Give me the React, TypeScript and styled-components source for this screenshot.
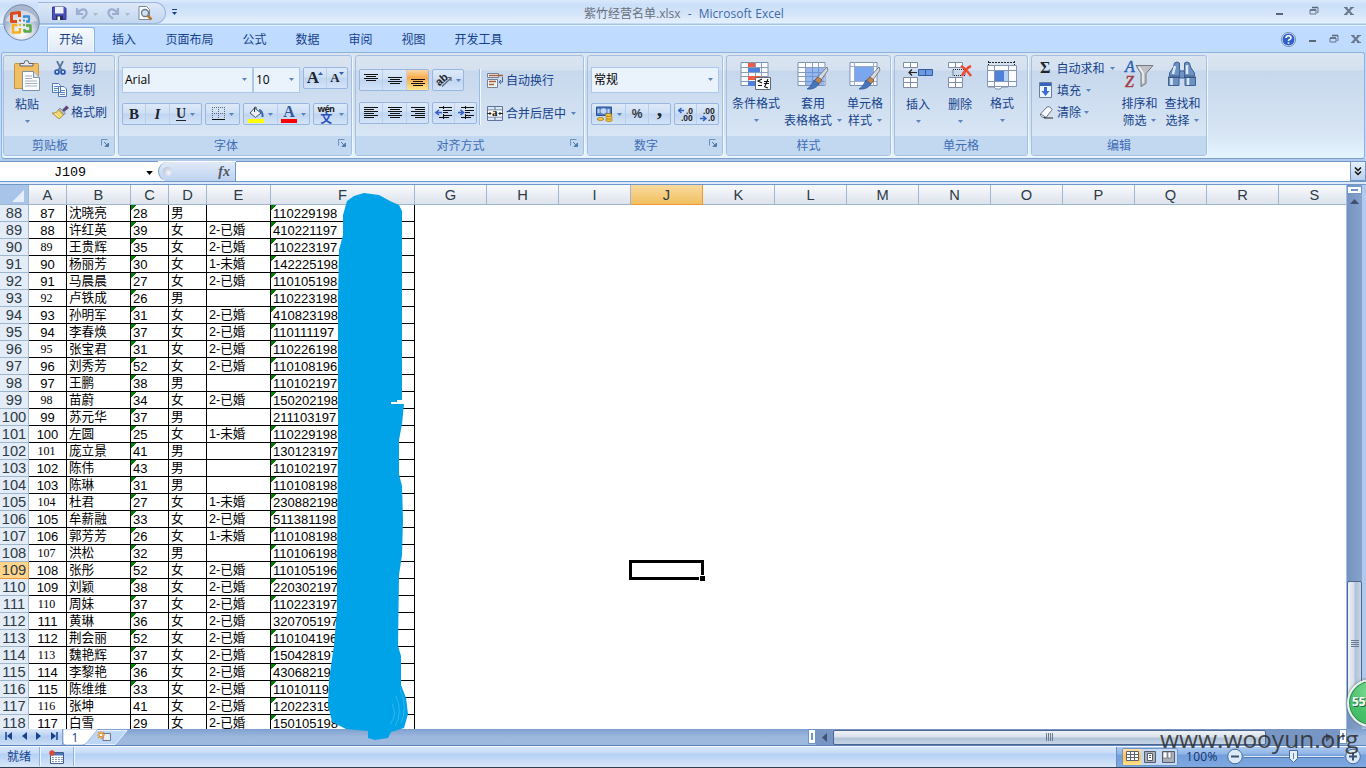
import React from "react";
import styled, { createGlobalStyle, css } from "styled-components";

const GlobalStyle = createGlobalStyle`
  * { box-sizing: border-box; }
  html, body { margin: 0; padding: 0; overflow: hidden; }
  body { font-family: "Open Sans", "Noto Sans CJK SC", sans-serif; font-size: 12px; color: #15428b; }
  svg { display: block; flex: none; }
`;

/* ---------- window frame ---------- */
const Window = styled.div`
  position: relative;
  width: 1366px;
  height: 768px;
  overflow: hidden;
  display: flex;
  flex-direction: column;
  background: #bfdbff;
`;
const TitleBar = styled.header`
  height: 25px;
  flex: none;
  display: flex;
  background: linear-gradient(#dbe9fb 0, #cadff8 5px, #d3e4f9 13px, #e4f0fd 23px, #a3c6ef 24px);
`;
const QuickAccess = styled.div`
  width: 128px;
  height: 22px;
  margin: 2px 0 0 38px;
  padding: 3px 0 0 14px;
  display: flex;
  border: 1px solid #9cb8dd;
  border-left: 0;
  border-radius: 0 12px 12px 0;
  background: linear-gradient(#dce8f8, #c3d7f0);
`;
const QatSlot = styled.div<{ $w: number; $pt?: number }>`
  width: ${(p) => p.$w}px;
  padding-top: ${(p) => p.$pt ?? 0}px;
`;
const QatMore = styled.div`
  padding: 9px 0 0 6px;
  width: 18px;
`;
const Title = styled.div`
  width: 400px;
  margin-left: 400px;
  padding-top: 5px;
  line-height: 17px;
  white-space: pre;
  word-spacing: 0.5px;
  font-size: 12px;
  color: #3e6aaa;
`;
const FileName = styled.span`
  color: #696f7c;
`;
const TitleControls = styled.div`
  margin-left: auto;
  padding: 6px 12px 0 0;
  display: flex;
  gap: 25px;
`;
const TabBar = styled.nav`
  height: 27px;
  flex: none;
  display: flex;
  padding-left: 47px;
  border-top: 1px solid #e6f1ff;
  background: #bfdbff;
`;
const Tab = styled.div<{ $w: number; $active?: boolean }>`
  width: ${(p) => p.$w}px;
  height: 28px;
  padding-top: 5px;
  text-align: center;
  line-height: 17px;
  ${(p) =>
    p.$active &&
    css`
      height: 26px;
      margin: 1px 0 0;
      padding-top: 3px;
      border: 1px solid #8db2e3;
      border-bottom: 0;
      border-radius: 3px 3px 0 0;
      box-shadow: inset 0 0 0 1px #f5faff;
      background: linear-gradient(#f7fbff, #dfe9f5);
    `}
`;
const TabControls = styled.div`
  margin-left: auto;
  padding: 1px 5px 0 0;
  display: flex;
  align-items: center;
  gap: 12px;
`;
const OfficeOrb = styled.div`
  position: absolute;
  left: 3px;
  top: 3px;
`;

/* ---------- ribbon ---------- */
const Ribbon = styled.section`
  height: 107px;
  flex: none;
  display: flex;
  gap: 3px;
  margin: 0 1px;
  padding: 2px 1px;
  border: 1px solid #8db2e3;
  border-bottom-color: #7b9fc9;
  border-radius: 3px;
  background: linear-gradient(#dbe5f1 0, #d5e1f0 17px, #c7d8ed 18px, #d6e4f3 78px, #e3f4ff 103px);
`;
const GroupBox = styled.div<{ $w: number }>`
  width: ${(p) => p.$w}px;
  height: 101px;
  border: 1px solid #a5bfdf;
  border-radius: 3px;
  box-shadow: 1px 1px 0 #eff6fd;
  display: flex;
  flex-direction: column;
  overflow: hidden;
`;
const GroupBody = styled.div<{ $pt?: number; $pl?: number }>`
  height: 80px;
  flex: none;
  display: flex;
  padding: ${(p) => p.$pt ?? 0}px 0 0 ${(p) => p.$pl ?? 0}px;
`;
const GroupLabel = styled.div`
  flex: 1;
  display: flex;
  justify-content: center;
  background: #c2d8f0;
  color: #3e6db5;
  line-height: 19px;
`;
const Launcher = styled.div`
  margin: 3px 4px 0 -13px;
`;
const LabelText = styled.span<{ $shift?: boolean }>`
  flex: 1;
  text-align: center;
  ${(p) => p.$shift && "padding-right: 18px;"}
`;
const Rows = styled.div<{ $gap: number; $ml?: number }>`
  display: flex;
  flex-direction: column;
  gap: ${(p) => p.$gap}px;
  margin-left: ${(p) => p.$ml ?? 0}px;
`;
const ClipboardList = styled(Rows)`
  margin-top: -3px;
`;
const Row = styled.div<{ $gap?: number; $pt?: number; $pl?: number }>`
  display: flex;
  gap: ${(p) => p.$gap ?? 3}px;
  padding-top: ${(p) => p.$pt ?? 0}px;
  padding-left: ${(p) => p.$pl ?? 0}px;
`;
const Combo = styled.div<{ $w: number }>`
  width: ${(p) => p.$w}px;
  height: 26px;
  padding: 0 5px 2px 2px;
  display: flex;
  align-items: center;
  justify-content: space-between;
  border: 1px solid #abc7ec;
  background: #eaf2fb;
  color: #000;
`;
const ButtonSet = styled.div`
  display: flex;
  height: 22px;
  border: 1px solid #98b6df;
  border-radius: 2px;
  background: linear-gradient(#dce9f8 0, #cfe0f5 9px, #c0d5f1 10px, #d3e4f8 100%);
`;
const Tool = styled.div<{ $w: number; $on?: boolean }>`
  width: ${(p) => p.$w}px;
  display: flex;
  align-items: center;
  justify-content: center;
  gap: 4px;
  & + & { border-left: 1px solid #b9cfec; }
  ${(p) => p.$on && css`background: linear-gradient(#fbd7a3, #fdaa4b 40%, #ffe58b);`}
`;
const Divider = styled.div`
  width: 2px;
  height: 56px;
  margin: 0 6px 0 2px;
  border-left: 1px solid #9abbe6;
  border-right: 1px solid #f0f7ff;
`;
const LineButton = styled.div<{ $gap?: number; $pl?: number }>`
  display: flex;
  align-items: center;
  height: 22px;
  padding-left: ${(p) => p.$pl ?? 0}px;
  gap: ${(p) => p.$gap ?? 3}px;
  white-space: nowrap;
`;
const BigButton = styled.div<{ $w: number }>`
  width: ${(p) => p.$w}px;
  display: flex;
  flex-direction: column;
  align-items: center;
  line-height: 17px;
  white-space: nowrap;
`;
const BigLine = styled.div<{ $top?: number }>`
  display: flex;
  align-items: center;
  gap: 5px;
  height: 17px;
  margin-top: ${(p) => p.$top ?? 0}px;
`;
const Glyph = styled.span<{ $size?: number; $italic?: boolean; $u?: boolean }>`
  font-family: "Liberation Serif", serif;
  font-weight: bold;
  font-size: ${(p) => p.$size ?? 15}px;
  line-height: 18px;
  color: #20242c;
  ${(p) => p.$italic && "font-style: italic;"}
  ${(p) => p.$u && "text-decoration: underline; text-underline-offset: 2px;"}
`;
const SizeMark = styled.svg`
  margin-left: -5px;
`;
const PercentGlyph = styled.span`
  font: bold 12px/18px "Liberation Sans", sans-serif;
  color: #33373f;
`;
const CommaGlyph = styled(Glyph)`
  line-height: 10px;
  height: 20px;
`;

/* ---------- formula bar ---------- */
const FormulaBar = styled.section`
  height: 26px;
  flex: none;
  display: flex;
  padding-top: 2px;
  background: linear-gradient(#b0c9ec 2px, transparent 2px), linear-gradient(#fff 22px, #6f97c7 22px, #6f97c7 23px, #dce9fa 23px, #dce9fa 25px, #6f97c7 25px);
`;
const NameBox = styled.div`
  width: 158px;
  height: 20px;
  padding: 2px 5px 0 54px;
  display: flex;
  align-items: center;
  justify-content: space-between;
  border-top: 1px solid #6f97c7;
  background: #fff;
  color: #000;
  font-family: "Liberation Mono", monospace;
  font-size: 13.4px;
`;
const FxArea = styled.div`
  width: 78px;
  height: 19px;
  margin-top: 1px;
  padding: 3px 5px 0 4px;
  display: flex;
  justify-content: space-between;
  border-right: 1px solid #6f97c7;
  border-left: 1px solid #7b9cca;
  border-radius: 10px 0 0 10px;
  background: linear-gradient(#e0ebf9, #bdd2ef);
`;
const FxKnob = styled.div`
  width: 9px;
  height: 9px;
  margin-top: 2px;
  border-radius: 50%;
  background: radial-gradient(circle at 65% 65%, #f5f8fd, #a9b6ca);
`;
const Fx = styled.span`
  font: italic bold 14px/13px "Liberation Serif", serif;
  color: #51565f;
`;
const FormulaInput = styled.div`
  flex: 1;
  border-top: 1px solid #6f97c7;
  height: 20px;
`;
const Expand = styled.div`
  width: 16px;
  height: 20px;
  padding: 5px 0 0 3px;
  border: 1px solid #6f97c7;
  background: linear-gradient(#e9f1fb, #b9cfec);
`;

/* ---------- sheet ---------- */
const Workspace = styled.main`
  height: 544px;
  flex: none;
  display: flex;
`;
const Sheet = styled.div`
  position: relative;
  width: 1347px;
  height: 544px;
  overflow: hidden;
  background: #fff;
  border-right: 1px solid #9ebfe6;
`;
const HeaderRow = styled.div`
  display: flex;
  height: 20px;
  width: 1400px;
`;
const Corner = styled.div`
  width: 29px;
  padding: 5px 3px 0 12px;
  border: solid #9eb6ce;
  border-width: 0 1px 1px 0;
  background: #a9c4e9;
`;
const ColHead = styled.div<{ $w: number; $on?: boolean }>`
  width: ${(p) => p.$w}px;
  border: solid #9eb6ce;
  border-width: 0 1px 1px 0;
  background: ${(p) => (p.$on ? "linear-gradient(#f9d99f, #f1c15f)" : "linear-gradient(#f8fafd, #dde3ec)")};
  ${(p) => p.$on && "border-color: #f29536;"}
  color: #2d3b45;
  text-align: center;
  font: 14.67px/20px "Liberation Sans", sans-serif;
`;
const DataRow = styled.div`
  display: flex;
  height: 17px;
`;
const RowHead = styled.div<{ $on?: boolean }>`
  width: 29px;
  border: solid #9eb6ce;
  border-width: 0 1px 1px 0;
  background: ${(p) => (p.$on ? "#ffd58d" : "#e4ecf7")};
  ${(p) => p.$on && "border-color: #f29536;"}
  color: #2d3b45;
  text-align: center;
  font: 14.67px/16px "Liberation Sans", sans-serif;
`;
const Cell = styled.div<{ $w: number; $center?: boolean; $serif?: boolean; $flag?: boolean }>`
  width: ${(p) => p.$w}px;
  padding-left: ${(p) => (p.$center ? 0 : 2)}px;
  text-align: ${(p) => (p.$center ? "center" : "left")};
  border: solid #000;
  border-width: 0 1px 1px 0;
  color: #000;
  overflow: hidden;
  white-space: nowrap;
  font: ${(p) => (p.$serif ? "12px" : "13px")}/17px ${(p) => (p.$serif ? '"Liberation Serif"' : '"Liberation Sans"')}, "Noto Sans CJK SC", sans-serif;
  ${(p) => p.$serif && "padding-right: 2px; line-height: 16px;"}
  ${(p) => p.$flag && "background: linear-gradient(135deg, #008000 3.6px, transparent 3.6px) 0 0 / 5px 5px no-repeat;"}
`;
const HanCell = styled(Cell)`
  font-size: 12.6px;
  line-height: 17px;
`;
const ActiveCell = styled.div`
  position: absolute;
  left: 629px;
  top: 375px;
  width: 75px;
  height: 20px;
  border: 3px solid #000;
`;
const FillHandle = styled.div`
  position: absolute;
  right: -5px;
  bottom: -5px;
  width: 7px;
  height: 7px;
  border: 1px solid #fff;
  background: #000;
`;
const VScroll = styled.div`
  width: 15px;
  display: flex;
  flex-direction: column;
  background: linear-gradient(90deg, #7593c0, #86a3cd);
`;
const VSplit = styled.div`
  height: 8px;
  margin: 1px 0 5px;
  padding-top: 2px;
  border: 1px solid #6f97c7;
  background: #fff;
  &::after { content: ""; display: block; height: 2px; margin: 0 3px; background: #7593c0; }
`;
const VThumb = styled.div`
  height: 126px;
  margin-top: 377px;
  display: flex;
  align-items: center;
  justify-content: center;
  border: 1px solid #4d6690;
  border-radius: 2px;
  background: linear-gradient(90deg, #eef1f6, #d6dfeb 45%, #aec1d8 55%, #c9d7e7);
`;
const FrameEdge = styled.div`
  width: 4px;
  background: #b0c9ec;
`;

/* ---------- bottom bars ---------- */
const SheetTabs = styled.section`
  height: 17px;
  flex: none;
  display: flex;
  border-bottom: 1px solid #5c84b8;
  background: linear-gradient(#7fa1d0, #9db8de 8px, #9fb9de);
`;
const NavButtons = styled.div`
  width: 63px;
  padding: 0 0 2px 1px;
  display: flex;
  align-items: center;
  justify-content: space-around;
  border-right: 1px solid #7e9fce;
  background: linear-gradient(#dbe8fa, #b4cdf0 8px, #cadef7);
`;
const TabStrip = styled.div`
  width: 745px;
`;
const HSplit = styled.div`
  width: 8px;
  height: 15px;
  border: 1px solid #6f97c7;
  padding: 3px 2px;
  background: #fff;
  &::after { content: ""; display: block; height: 7px; width: 2px; background: #7593c0; }
`;
const HScroll = styled.div`
  width: 523px;
  display: flex;
  align-items: center;
  background: #7896c3;
`;
const HThumb = styled.div`
  width: 433px;
  height: 15px;
  display: flex;
  align-items: center;
  justify-content: center;
  border: 1px solid #4d6690;
  border-radius: 2px;
  background: linear-gradient(#f0f2f6, #d8e1ec 45%, #b0c3d8 55%, #c6d5e5);
`;
const ArrowSlot = styled.div<{ $w: number; $end?: boolean }>`
  width: ${(p) => p.$w}px;
  display: flex;
  justify-content: ${(p) => (p.$end ? "flex-end" : "center")};
  padding-right: ${(p) => (p.$end ? 7 : 0)}px;
`;
const StatusBar = styled.footer`
  height: 22px;
  flex: none;
  display: flex;
  border-top: 1px solid #f2f7ff;
  border-bottom: 1px solid #2d3e52;
  background: linear-gradient(#d7e6f9 0, #c7dcf8 6px, #b3d0f5 7px, #d7e5f7 19px);
`;
const StatusItem = styled.div<{ $w: number }>`
  width: ${(p) => p.$w}px;
  height: 19px;
  padding-right: 1px;
  display: flex;
  align-items: center;
  justify-content: center;
  line-height: 17px;
  border-right: 1px solid #8fb0dc;
  box-shadow: 1px 0 0 #edf5ff;
`;
const StatusRight = styled.div`
  margin-left: auto;
  width: 250px;
  padding: 0 0 1px 5px;
  display: flex;
  align-items: center;
  border-left: 1px solid #6c8fc2;
  background: linear-gradient(#abc9ef, #8fb4e6 7px, #729fdb 8px, #7ea8e0 20px);
`;
const ViewButtons = styled.div`
  display: flex;
  height: 18px;
  border: 1px solid #7195c7;
  border-radius: 2px;
  background: #c4daf6;
`;
const ViewButton = styled.div<{ $on?: boolean }>`
  width: 18px;
  display: flex;
  align-items: center;
  justify-content: center;
  ${(p) => p.$on && "background: linear-gradient(#ffe0a8, #ffc04d 50%, #ffe48c);"}
`;
const Percent = styled.span`
  width: 55px;
  padding-left: 8px;
  line-height: 16px;
  letter-spacing: 0.3px;
  color: #12336e;
`;

/* ---------- floating items ---------- */
const Paint = styled.svg`
  position: absolute;
  left: 320px;
  top: 190px;
`;
const Watermark = styled.div`
  position: absolute;
  left: 1160px;
  top: 722px;
  font: 24.5px/34px "Open Sans", sans-serif;
  color: rgba(48, 48, 48, 0.88);
  white-space: nowrap;
`;
const Badge = styled.div`
  position: absolute;
  left: 1347px;
  top: 679px;
  width: 48px;
  height: 48px;
  padding: 13px 0 0 3px;
  border-radius: 50%;
  border: 2px solid #edf1ef;
  box-shadow: 0 0 3px #566, inset 0 0 0 1px #2c8f52;
  background: radial-gradient(circle at 50% 25%, #84dc97, #46c06a 55%, #42b860);
  color: #fff;
  font: bold 12px/16px "Open Sans", sans-serif;
  text-shadow: 1px 1px 0 #1d6b3a;
`;

/* ---------- small drawings ---------- */
const Down = ({ c = "#5a84bd", s = 5 }: { c?: string; s?: number }) => (
  <svg width={s} height={Math.ceil(s / 2)} viewBox="0 0 5 3"><path d="M0 0h5L2.500 3z" fill={c} /></svg>
);
const LauncherIcon = () => (
  <Launcher>
    <svg width="9" height="9"><path d="M.5 6.500V.500H6.500" fill="none" stroke="#6c8fbd" /><path d="M3 3l3 3" stroke="#527aab" /><path d="M4 7.500H7.500V4z" fill="#527aab" stroke="#527aab" /></svg>
  </Launcher>
);
const Minimize = () => <svg width="9" height="13"><path d="M1 8h7" stroke="#596779" strokeWidth="2" /></svg>;
const Restore = () => (
  <svg width="10" height="11"><path d="M3 1.500h6v5H8M1 4h6v4H1z" fill="none" stroke="#68778c" /><path d="M3 1.500h6M1 4h6" stroke="#59677a" strokeWidth="1.500" /></svg>
);
const Close = () => <svg width="10" height="11"><path d="M1.500 1.500l6.500 7M8 1.500l-6.500 7" stroke="#6a788d" strokeWidth="2" /><path d="M0 1.500h3.500M6 1.500h4M0 8.500h3.500M6 8.500h4" stroke="#6a788d" /></svg>;
const Orb = () => (
  <svg width="38" height="38" viewBox="0 0 38 38">
    <defs>
      <radialGradient id="orb" cx=".5" cy=".8"><stop offset="0" stopColor="#fff" /><stop offset=".65" stopColor="#d5dce8" /><stop offset="1" stopColor="#a9b7ce" /></radialGradient>
    </defs>
    <circle cx="18.500" cy="19.500" r="17.700" fill="url(#orb)" stroke="#7488a8" />
    <path d="M3 18A16 14 0 0 1 34 18Q18 22 3 18z" fill="#fff" opacity=".5" />
    <g fill="none" strokeWidth="3" strokeLinejoin="round">
      <path d="M14 18.500H8.500V10.500L16.500 9.500V14" stroke="#dd4a1c" />
      <path d="M21 15V13.500H26V18.500H23" stroke="#3b8fd4" strokeWidth="2.300" />
      <path d="M14.500 22H10V29.500H17V25" stroke="#f5b21e" strokeWidth="2.500" />
      <path d="M23 22.500H27.500V28.500H21.500V26" stroke="#5ba744" strokeWidth="2.500" />
    </g>
    <path d="M16 16.500h2v2h-2z" fill="#e0622a" /><path d="M20 16.500h2v2h-2z" fill="#3b8fd4" /><path d="M16 21h2v2h-2z" fill="#f5b21e" /><path d="M20 21h2v2h-2z" fill="#73ac45" />
  </svg>
);
const Save = () => (
  <svg width="15" height="15"><path d="M.5 1h12l1.500 1.500V13.500H.5z" fill="#4a51bd" stroke="#343a91" /><path d="M3 1h8.500v6.500H3z" fill="#edf1fd" /><path d="M4 9.500h7V14H4z" fill="#292e55" /><path d="M5.500 10.500H8V14H5.500z" fill="#fff" /></svg>
);
const Undo = () => (
  <svg width="14" height="15"><path d="M2 2v6h6M3 7C5 2.500 11 2 11.500 6S9 11 7 12.500" fill="none" stroke="#9bafd0" strokeWidth="2.200" /></svg>
);
const Redo = () => (
  <svg width="14" height="15"><path d="M12 2v6H6M11 7C9 2.500 3 2 2.500 6S5 11 7 12.500" fill="none" stroke="#9bafd0" strokeWidth="2.200" /></svg>
);
const Preview = () => (
  <svg width="16" height="15"><path d="M2 .5h7.500l3 3v10H2z" fill="#fff" stroke="#7b8798" /><circle cx="8" cy="7" r="3.500" fill="#cde2f5" stroke="#68788c" strokeWidth="1.300" /><path d="M10.500 9.500l4 4" stroke="#b9772b" strokeWidth="2.500" /></svg>
);
const Help = () => (
  <svg width="15" height="15"><circle cx="7.500" cy="7.500" r="6.500" fill="#2e62c9" stroke="#f4f8ff" /><circle cx="7.500" cy="7.500" r="7" fill="none" stroke="#536f9e" strokeWidth=".8" /><path d="M5 6Q5 3.700 7.500 3.700T10 6Q10 7 8.500 7.500 7.500 8 7.500 9M7.500 10.300v1.500" stroke="#fff" strokeWidth="1.600" fill="none" /></svg>
);
const Paste = () => (
  <svg width="28" height="31"><path d="M1.500 4.500q0-1 1-1h22q1 0 1 1v24h-24z" fill="#f0bf63" stroke="#c69344" /><path d="M7 6V3.500h4Q11 .5 13.500 .5T16 3.500h4V6z" fill="#e8e9ec" stroke="#5e6168" /><path d="M9.500 11.500h11l6 6v13h-17z" fill="#fdfdff" stroke="#7b91ad" /><path d="M20.500 11.500v6h6" fill="#dbe5f1" stroke="#7b91ad" /><path d="M12 16h7M12 18.500h7M12 21h12M12 23.500h12M12 26h12" stroke="#a3afc1" /></svg>
);
const Cut = () => (
  <svg width="14" height="14"><path d="M4 0l4.500 9M10 0L5.500 9" stroke="#56769e" strokeWidth="1.800" /><circle cx="4" cy="11" r="2" fill="none" stroke="#2d56b0" strokeWidth="1.700" /><circle cx="10" cy="11" r="2" fill="none" stroke="#2d56b0" strokeWidth="1.700" /></svg>
);
const Copy = () => (
  <svg width="16" height="14"><path d="M.5.5h6l2 2v7h-8zM6.500 3.500h5.500l2.500 2.500v7.500H6.500z" fill="#f5faff" stroke="#5377b4" /><path d="M2 3.500h4M2 5.500h4M2 7.500h3M8 7.500h5M8 9.500h5M8 11.500h5" stroke="#5c87c6" /></svg>
);
const Brush = () => (
  <svg width="17" height="14"><path d="M10 5l4.500-4.500L17 3l-5 4z" fill="#5a4979" /><path d="M8 3l5.500 5.500-2 1.500-5.500-5z" fill="#b4bac4" stroke="#6d7480" strokeWidth=".6" /><path d="M6.500 4.500L11.500 10 7 14 0 8Q5 8.500 6.500 4.500z" fill="#ecd15f" stroke="#9d8230" strokeWidth=".8" /><path d="M3 8.500L7.500 12.500M6 7.500l3.500 3.500" stroke="#fdf4bd" /></svg>
);
const Lines = ({ rows }: { rows: [number, number, number][] }) => (
  <svg width="14" height="14">{rows.map(([x, y, w], i) => <path key={i} d={`M${x} ${y + 0.5}h${w}`} stroke="#111" />)}</svg>
);
const BorderIcon = () => (
  <svg width="13" height="14"><path d="M.5 0v11M6.500 0v11M12.500 0v11M0 .500h13M0 6.500h13" stroke="#59677a" strokeDasharray="1 1" /><path d="M0 12.500h13" stroke="#111" /></svg>
);
const Bucket = () => (
  <svg width="16" height="17"><path d="M6.500 2l6.500 5-5.500 4.500L2 7z" fill="#e9eff8" stroke="#44536a" /><path d="M6.500 6V1.500q1.500-1.500 2 1" fill="none" stroke="#333" /><path d="M11 4q4 1 3.500 7" fill="none" stroke="#3b69ad" strokeWidth="2" /><path d="M0 13h16v4H0z" fill="#ff0" /></svg>
);
const FontColorBox = styled.div`
  width: 16px;
  height: 17px;
  border-bottom: 4px solid #f00;
  font: bold 16px/12px "Liberation Serif", serif;
  text-align: center;
  color: #32599b;
`;
const Phonetic = styled.div`
  width: 17px;
  font: bold 9px/8px "Open Sans", "Noto Sans CJK SC", sans-serif;
  letter-spacing: -0.7px;
  color: #222;
`;
const PhoneticHan = styled.div`
  font: bold 12px/10px "Noto Sans CJK SC", sans-serif;
  color: #2c53bb;
  text-align: center;
`;
const Orientation = () => (
  <svg width="16" height="16"><text x="0" y="12" transform="rotate(-42 5 9)" fontFamily="Liberation Sans" fontWeight="bold" fontSize="11" fill="#222">ab</text><path d="M6 14.500L15 6M11.500 5.500H15V9" stroke="#5b6575" fill="none" strokeWidth="1.200" /></svg>
);
const Indent = ({ right }: { right?: boolean }) => (
  <svg width="18" height="14"><path d={right ? "M1 6.500h5M3.500 4l3 2.500-3 2.500" : "M7 6.500H1M4 4L1 6.500 4 9"} fill="none" stroke="#355fc0" strokeWidth="1.600" /><path d="M4 1.500h13M4 11.500h10M8 4.500h9M8 6.500h5M8 9.500h9" stroke="#111" strokeWidth="1.200" /><path d="M8.500 0v14" stroke="#111" strokeDasharray="1 1" /></svg>
);
const WrapIcon = () => (
  <svg width="16" height="15"><path d="M.5.500h11v4H.5zM.5 6.500h10v8H.5z" fill="#f3f5fa" stroke="#758296" /><path d="M2 2.500h14" stroke="#a75f38" strokeWidth="1.300" /><path d="M2 8.500h7M2 11.500h5" stroke="#a75f38" strokeWidth="1.300" /><path d="M15.500 4v5H12M14 7l-2 2 2 2" fill="none" stroke="#426a9f" /></svg>
);
const MergeIcon = () => (
  <svg width="16" height="15"><path d="M.5.500h15v14H.5zM.5 4h15M.5 11h15M8 0v4M8 11v4" fill="#dbe7f6" stroke="#5f7699" /><path d="M1 4.500h14v6H1z" fill="#fff" /><text x="5" y="10" fontFamily="Liberation Serif" fontWeight="bold" fontSize="11" fill="#111">a</text><path d="M0 7.500h4M2.500 6L4 7.500 2.500 9M16 7.500h-4M13.500 6L12 7.500 13.500 9" stroke="#222" fill="none" /></svg>
);
const Currency = () => (
  <svg width="17" height="16"><path d="M.5 1h15v8.500H.5z" fill="#4f7dc0" stroke="#294e93" /><ellipse cx="7.500" cy="5" rx="3" ry="2.700" fill="#c3d7f2" /><path d="M1.500 3h2v4h-2zM11.500 3h2v4h-2z" fill="#c3d7f2" /><g fill="#f5c841" stroke="#9f6f18" strokeWidth=".7"><ellipse cx="13" cy="14" rx="3.300" ry="1.500" /><ellipse cx="13" cy="11.500" rx="3.300" ry="1.500" /><ellipse cx="12.500" cy="9" rx="3.300" ry="1.500" /><ellipse cx="4.500" cy="13" rx="3.300" ry="1.500" /></g></svg>
);
const Decimal = ({ less }: { less?: boolean }) => (
  <svg width="16" height="15" fontFamily="Liberation Sans" fontWeight="bold" fontSize="8.500" fill="#222">
    <text x={less ? 3 : 8} y="6.500">{less ? ".00" : ".0"}</text><text x={less ? 8 : 3} y="14">{less ? ".0" : ".00"}</text>
    <path d={less ? "M0 11.500h5M3 9l3 2.500L3 14" : "M6 3.500H1M3.500 1L.5 3.500l3 2.500"} fill="none" stroke="#315cc0" strokeWidth="1.500" />
  </svg>
);
const GridArt = ({ cols, rows }: { cols: number; rows: number }) => (
  <>
    <path d="M1 1.500h27v23H1z" fill="#fbfcff" stroke="#7e91b1" />
    {Array.from({ length: cols - 1 }, (_, i) => <path key={"c" + i} d={`M${Math.round(1 + ((i + 1) * 27) / cols) + 0.5} 1v24`} stroke="#8b9cba" />)}
    {Array.from({ length: rows - 1 }, (_, i) => <path key={"r" + i} d={`M1 ${Math.round(1 + ((i + 1) * 24) / rows) + 0.5}h27`} stroke="#8b9cba" />)}
  </>
);
const BrushArt = () => (
  <g><path d="M30 6l1 3-9 13-4-3z" fill="#d5dae2" stroke="#616975" strokeWidth=".8" /><path d="M21 16l4 3-3 4-5-3z" fill="#bd8550" stroke="#6d4a2e" strokeWidth=".7" /><path d="M17 19l5 4q-4 6-12 5 4-2 7-9z" fill="#4775bd" stroke="#2f5595" strokeWidth=".7" /></g>
);
const CondIcon = () => (
  <svg width="32" height="30"><GridArt cols={4} rows={5} /><path d="M8 2h7v4H8zM8 15h13v4H8z" fill="#f15a43" /><path d="M8 7h12v4H8z" fill="#4f7fdd" /><path d="M8 20h7v5H8z" fill="#4f7fdd" /><path d="M15.500 16.500h15v12h-15z" fill="#fff" stroke="#5c6677" /><path d="M22 18l-4 2 4 2M18 24.500h4M24 20.500h5M24 22.500h5M28 18l-3 7M24 25.500l4 1.500" fill="none" stroke="#111" strokeWidth="1.100" /></svg>
);
const TableIcon = () => <svg width="32" height="30"><GridArt cols={4} rows={5} /><path d="M9 7h18v17H9z" fill="#5f93e6" opacity=".65" /><BrushArt /></svg>;
const StyleIcon = () => <svg width="32" height="30"><GridArt cols={1} rows={1} /><path d="M5.500 1v24M24.500 1v24M1 5.500h27M1 20.500h27" stroke="#9babc4" /><path d="M6 6h18v14H6z" fill="#79a6ef" /><BrushArt /></svg>;
const MiniGrid = ({ y }: { y: number }) => <path d={`M1.500 ${y}.500h14v5h-14zM8.500 ${y}v5`} fill="#fff" stroke="#7e8ea9" />;
const InsertIcon = () => (
  <svg width="32" height="30"><MiniGrid y={1} /><MiniGrid y={16} /><MiniGrid y={21} /><path d="M16.500 8.500h14v6h-14zM23.500 8v6" fill="#6b9be5" stroke="#345a9c" /><path d="M15 11.500H7M10 8.500L7 11.500l3 3" fill="none" stroke="#222" strokeWidth="1.200" /></svg>
);
const DeleteIcon = () => (
  <svg width="32" height="30"><g transform="translate(3 0)"><MiniGrid y={1} /><MiniGrid y={16} /><MiniGrid y={21} /><path d="M6 8.500h12v6H6z" fill="none" stroke="#222" strokeDasharray="1 1" /><path d="M14 5q5 3 10 10M24 5q-5 2-9 10" stroke="#f04b31" strokeWidth="2.500" fill="none" /></g></svg>
);
const FormatIcon = () => (
  <svg width="32" height="30"><path d="M3 1.500h25M2.500 0v4M28.500 0v4" stroke="#222" strokeDasharray="2 1" /><path d="M1.500 4.500h29v21h-29zM8.500 4v21M22.500 4v21M1 9.500h30M1 20.500h30" fill="#fafcff" stroke="#8897b1" /><path d="M9 10h9v10H9z" fill="#4f80da" /><path d="M18 10h4v10h-4z" fill="#b9d1f7" /><path d="M2 26h6l2 2h4l2-2h6" fill="#fff" stroke="#7e8ea9" /></svg>
);
const FillIcon = () => <svg width="13" height="16"><path d="M.5.500h12v15H.5z" fill="#eff5fe" stroke="#667f9f" /><path d="M1 1h11v3H1z" fill="#3764bd" /><path d="M5 5h3v4h2.500l-4 5-4-5H5z" fill="#386cd2" /></svg>;
const EraserIcon = () => <svg width="15" height="13"><path d="M1.500 8L8 1q1-.8 2.500 0l2 1.500q1 1 0 2L7 11.500H4L1.500 9.500z" fill="#f8faff" stroke="#697080" /><path d="M2 8l5 3.500" stroke="#697080" /><path d="M5 12h9" stroke="#222" /></svg>;
const SortIcon = () => (
  <svg width="32" height="31"><g fontFamily="Liberation Serif" fontStyle="italic" fontSize="16" strokeWidth=".5"><text x="2" y="12" fill="#2c61b5" stroke="#2c61b5">A</text><text x="2" y="27" fill="#a63b40" stroke="#a63b40">Z</text></g><path d="M13 5.500h17l-7 8v10l-5 3v-13z" fill="#bfc1c4" stroke="#76797f" /><path d="M16 7l4 6v10" stroke="#f0f1f3" strokeWidth="1.500" fill="none" /></svg>
);
const FindIcon = () => (
  <svg width="32" height="30">
    <g fill="#6c91c2" stroke="#3d6190">
      <path d="M8.500 3q2.500-2 5 0v6l1 3v4h-11v-3l4-6zM23.500 3q-2.500-2-5 0v6l-1 3v4h11v-3l-4-6z" />
      <path d="M2.500 17.500h10.500v8h-10.500zM19 17.500h10.500v8H19zM13.500 11h5v7h-5z" />
    </g>
    <path d="M5.500 18v7M22 18v7M9 6l-2 8M21 5v9" stroke="#dbe8f8" strokeWidth="2.500" />
    <path d="M2 17h12M18 17h12" stroke="#264873" />
  </svg>
);
const NavIcon = ({ left, bar }: { left?: boolean; bar?: boolean }) => (
  <svg width="8" height="8"><g transform={left ? "matrix(-1 0 0 1 8 0)" : undefined}><path d="M1 0l5 4-5 4z" fill="#15428b" />{bar && <path d="M7 0v8" stroke="#15428b" strokeWidth="1.500" />}</g></svg>
);
const Grip = ({ vertical }: { vertical?: boolean }) => (
  <svg width="8" height="8"><path d={vertical ? "M0 .500h8M0 2.500h8M0 4.500h8M0 6.500h8" : "M.5 0v8M2.500 0v8M4.500 0v8M6.500 0v8"} stroke="#68788d" /></svg>
);
const SideArrow = ({ right }: { right?: boolean }) => (
  <svg width="6" height="9"><path d={right ? "M0 0l5 4.500L0 9z" : "M5 0v9L0 4.500z"} fill="#405270" /></svg>
);
const SheetTabArt = () => (
  <svg width="70" height="16">
    <path d="M22 15.500L34 1.500H64L52 15.500z" fill="#bfd7f6" stroke="#e8f1fd" /><path d="M0 0h35L24 13.500Q22 16 19 16H3Q0 16 0 13z" fill="#fff" stroke="#7e9fce" strokeWidth=".7" />
    <text x="8.500" y="13" fontSize="12" fill="#15428b" fontFamily="Open Sans">1</text>
    <path d="M38 4.500h9.500v7H40v-5z" fill="#e8edf6" stroke="#6b7787" /><path d="M34 6h8M38 2v8M35 3l6 6M41 3l-6 6" stroke="#e49127" strokeWidth="1.200" /><circle cx="38" cy="6" r="1.300" fill="#fff" />
  </svg>
);
const MacroIcon = () => (
  <svg width="15" height="14"><path d="M1.500 2.500h13v11h-13z" fill="#fff" stroke="#42608f" /><path d="M2 3h12v2.500H2z" fill="#4d76bb" /><path d="M3 7.500h11M3 9.500h11M3 11.500h11" stroke="#8b9ebd" strokeDasharray="2 1" /><circle cx="3" cy="3" r="2.700" fill="#db4a36" /></svg>
);
const ZoomSlider = () => (
  <svg width="139" height="20">
    <path d="M17 9.500h100" stroke="#e0ecfb" /><path d="M17 10.500h100" stroke="#5279b3" />
    {[8, 126].map((x) => <g key={x}><circle cx={x} cy="9.500" r="7.300" fill="#dce9f9" stroke="#496a9d" /><path d={`M${x - 4} 9.500h8${x > 50 ? `M${x} 5.500v8` : ""}`} stroke="#3b5273" strokeWidth="2" /></g>)}
    <path d="M62.500 3.500h8v8l-4 4-4-4z" fill="#e7effa" stroke="#496a9d" /><path d="M66.500 6v6" stroke="#6585b3" />
  </svg>
);

/* ---------- data ---------- */
const columns: [string, number][] = [["A", 38], ["B", 64], ["C", 38], ["D", 38], ["E", 64], ["F", 144], ..."GHIJKLMNOPQRS".split("").map((c) => [c, 72] as [string, number])];
const people: [string, number, string, string, string][] = [
  ["沈晓亮", 28, "男", "", "110229198"], ["许红英", 39, "女", "2-已婚", "410221197"], ["王贵辉", 35, "女", "2-已婚", "110223197"],
  ["杨丽芳", 30, "女", "1-未婚", "142225198"], ["马晨晨", 27, "女", "2-已婚", "110105198"], ["卢铁成", 26, "男", "", "110223198"],
  ["孙明军", 31, "女", "2-已婚", "410823198"], ["李春焕", 37, "女", "2-已婚", "110111197"], ["张宝君", 31, "女", "2-已婚", "110226198"],
  ["刘秀芳", 52, "女", "2-已婚", "110108196"], ["王鹏", 38, "男", "", "110102197"], ["苗蔚", 34, "女", "2-已婚", "150202198"],
  ["苏元华", 37, "男", "", "211103197"], ["左圆", 25, "女", "1-未婚", "110229198"], ["庞立景", 41, "男", "", "130123197"],
  ["陈伟", 43, "男", "", "110102197"], ["陈琳", 31, "男", "", "110108198"], ["杜君", 27, "女", "1-未婚", "230882198"],
  ["牟薪融", 33, "女", "2-已婚", "511381198"], ["郭芳芳", 26, "女", "1-未婚", "110108198"], ["洪松", 32, "男", "", "110106198"],
  ["张彤", 52, "女", "2-已婚", "110105196"], ["刘颖", 38, "女", "2-已婚", "220302197"], ["周妹", 37, "女", "2-已婚", "110223197"],
  ["黄琳", 36, "女", "2-已婚", "320705197"], ["荆会丽", 52, "女", "2-已婚", "110104196"], ["魏艳辉", 37, "女", "2-已婚", "150428197"],
  ["李黎艳", 36, "女", "2-已婚", "430682197"], ["陈维维", 33, "女", "2-已婚", "110101198"], ["张坤", 41, "女", "2-已婚", "120223197"],
  ["白雪", 29, "女", "2-已婚", "150105198"],
];
const tabs: [string, number][] = [["插入", 58], ["页面布局", 73], ["公式", 57], ["数据", 49], ["审阅", 57], ["视图", 49], ["开发工具", 81]];

function Group({ w, label, pt, pl, launcher, children }: { w: number; label: string; pt?: number; pl?: number; launcher?: boolean; children: React.ReactNode }) {
  return (
    <GroupBox $w={w}>
      <GroupBody $pt={pt} $pl={pl}>{children}</GroupBody>
      <GroupLabel><LabelText $shift={launcher}>{label}</LabelText>{launcher && <LauncherIcon />}</GroupLabel>
    </GroupBox>
  );
}
function Big({ w, icon, a, b, gap = 1 }: { w: number; icon: React.ReactNode; a: string; b?: string; gap?: number }) {
  return (
    <BigButton $w={w}>
      {icon}
      <BigLine $top={gap}>{a}</BigLine>
      <BigLine>{b}<Down /></BigLine>
    </BigButton>
  );
}

export default function App() {
  return (
    <Window>
      <GlobalStyle />
      <TitleBar>
        <QuickAccess>
          <QatSlot $w={23}><Save /></QatSlot>
          <QatSlot $w={18}><Undo /></QatSlot>
          <QatSlot $w={13} $pt={7}><Down c="#adb4c3" /></QatSlot>
          <QatSlot $w={19}><Redo /></QatSlot>
          <QatSlot $w={12} $pt={7}><Down c="#adb4c3" /></QatSlot>
          <Preview />
        </QuickAccess>
        <QatMore><svg width="6" height="7"><path d="M0 .500h5" stroke="#15428b" /><path d="M0 3h5L2.500 6z" fill="#15428b" /></svg></QatMore>
        <Title><FileName>紫竹经营名单.xlsx</FileName>  -  Microsoft Excel</Title>
        <TitleControls><Minimize /><Restore /><Close /></TitleControls>
      </TitleBar>
      <TabBar>
        <Tab $w={48} $active>开始</Tab>
        {tabs.map(([t, w]) => <Tab key={t} $w={w}>{t}</Tab>)}
        <TabControls><Help /><Minimize /><Restore /><Close /></TabControls>
      </TabBar>
      <Ribbon>
        <Group w={112} label="剪贴板" launcher pt={4} pl={1}>
          <BigButton $w={44}><Paste /><BigLine $top={5}>粘贴</BigLine><BigLine><Down /></BigLine></BigButton>
          <ClipboardList $gap={0} $ml={3}>
            <LineButton $gap={5} $pl={1}><Cut />剪切</LineButton>
            <LineButton $gap={3}><Copy />复制</LineButton>
            <LineButton $gap={2}><Brush />格式刷</LineButton>
          </ClipboardList>
        </Group>
        <Group w={234} label="字体" launcher pt={11} pl={3}>
          <Rows $gap={10}>
            <Row>
              <Row $gap={0}><Combo $w={131}>Arial<Down /></Combo><Combo $w={47}>10<Down /></Combo></Row>
              <ButtonSet>
                <Tool $w={22}><Glyph $size={17}>A</Glyph><SizeMark width="5" height="12"><path d="M0 3h5L2.500 0z" fill="#315fae" /></SizeMark></Tool>
                <Tool $w={21}><Glyph $size={13}>A</Glyph><SizeMark width="5" height="12"><path d="M0 0h5L2.500 3z" fill="#315fae" /></SizeMark></Tool>
              </ButtonSet>
            </Row>
            <Row>
              <ButtonSet><Tool $w={22}><Glyph>B</Glyph></Tool><Tool $w={24}><Glyph $italic>I</Glyph></Tool><Tool $w={32}><Glyph $size={14} $u>U</Glyph><Down /></Tool></ButtonSet>
              <ButtonSet><Tool $w={33}><BorderIcon /><Down /></Tool></ButtonSet>
              <ButtonSet><Tool $w={33}><Bucket /><Down /></Tool><Tool $w={32}><FontColorBox>A</FontColorBox><Down /></Tool></ButtonSet>
              <ButtonSet><Tool $w={33}><Phonetic>wén<PhoneticHan>文</PhoneticHan></Phonetic><Down /></Tool></ButtonSet>
            </Row>
          </Rows>
        </Group>
        <Group w={229} label="对齐方式" launcher pt={13} pl={3}>
          <Rows $gap={11}>
            <Row>
              <ButtonSet>
                <Tool $w={22}><Lines rows={[[0, 1, 14], [2, 3, 10], [0, 5, 14], [2, 7, 10]]} /></Tool>
                <Tool $w={24}><Lines rows={[[0, 4, 14], [2, 6, 10], [0, 8, 14], [2, 10, 10]]} /></Tool>
                <Tool $w={22} $on><Lines rows={[[0, 6, 14], [2, 8, 10], [0, 10, 14], [2, 12, 10]]} /></Tool>
              </ButtonSet>
              <ButtonSet><Tool $w={30}><Orientation /><Down /></Tool></ButtonSet>
            </Row>
            <Row>
              <ButtonSet>{[0, 2, 4].map((x, i) => <Tool key={x} $w={[22, 24, 22][i]}><Lines rows={[[0, 1, 14], [x, 3, 10], [0, 5, 14], [x, 7, 10], [0, 9, 14], [x, 11, 10]]} /></Tool>)}</ButtonSet>
              <ButtonSet><Tool $w={21}><Indent /></Tool><Tool $w={22}><Indent right /></Tool></ButtonSet>
            </Row>
          </Rows>
          <Divider />
          <Rows $gap={11}>
            <LineButton><WrapIcon />自动换行</LineButton>
            <Row $gap={5}><LineButton><MergeIcon />合并后居中</LineButton><LineButton><Down /></LineButton></Row>
          </Rows>
        </Group>
        <Group w={136} label="数字" launcher pt={11} pl={3}>
          <Rows $gap={10}>
            <Combo $w={128}>常规<Down /></Combo>
            <Row>
              <ButtonSet><Tool $w={33}><Currency /><Down /></Tool><Tool $w={23}><PercentGlyph>%</PercentGlyph></Tool><Tool $w={22}><CommaGlyph $size={22}>,</CommaGlyph></Tool></ButtonSet>
              <ButtonSet><Tool $w={21}><Decimal /></Tool><Tool $w={22}><Decimal less /></Tool></ButtonSet>
            </Row>
          </Rows>
        </Group>
        <Group w={165} label="样式" pt={5} pl={0}>
          <Big w={58} icon={<CondIcon />} a="条件格式" gap={4} />
          <Big w={56} icon={<TableIcon />} a="套用" b="表格格式" gap={4} />
          <Big w={48} icon={<StyleIcon />} a="单元格" b="样式" gap={4} />
        </Group>
        <Group w={134} label="单元格" pt={5} pl={2}>
          <Big w={42} icon={<InsertIcon />} a="插入" gap={5} />
          <Big w={42} icon={<DeleteIcon />} a="删除" gap={5} />
          <Big w={42} icon={<FormatIcon />} a="格式" gap={4} />
        </Group>
        <Group w={176} label="编辑" pt={1} pl={7}>
          <Rows $gap={0}>
            <LineButton $gap={6} $pl={1}><Glyph $size={16}>Σ</Glyph>自动求和<Down /></LineButton>
            <LineButton $gap={5}><FillIcon />填充<Down /></LineButton>
            <LineButton $gap={3}><EraserIcon />清除<Down /></LineButton>
          </Rows>
          <Row $gap={0} $pt={3} $pl={1}>
            <Big w={46} icon={<SortIcon />} a="排序和" b="筛选" gap={4} />
            <Big w={40} icon={<FindIcon />} a="查找和" b="选择" gap={5} />
          </Row>
        </Group>
      </Ribbon>
      <FormulaBar>
        <NameBox>J109<Down c="#000" s={7} /></NameBox>
        <FxArea><FxKnob /><Fx>fx</Fx></FxArea>
        <FormulaInput />
        <Expand><svg width="8" height="9"><path d="M1 .500l3 3 3-3M1 4.500l3 3 3-3" fill="none" stroke="#111" strokeWidth="1.500" /></svg></Expand>
      </FormulaBar>
      <Workspace>
        <Sheet>
          <HeaderRow>
            <Corner><svg width="12" height="12"><path d="M12 0v12H0z" fill="#e6eefa" /></svg></Corner>
            {columns.map(([c, w]) => <ColHead key={c} $w={w} $on={c === "J"}>{c}</ColHead>)}
          </HeaderRow>
          {people.map(([name, age, sex, status, id], i) => {
            const row = 88 + i;
            return (
              <DataRow key={row}>
                <RowHead $on={row === 109}>{row}</RowHead>
                <Cell $w={38} $center $serif={(row - 90) % 3 === 0}>{row - 1}</Cell>
                <HanCell $w={64}>{name}</HanCell>
                <Cell $w={38} $flag={row < 117}>{age}</Cell>
                <HanCell $w={38}>{sex}</HanCell>
                <HanCell $w={64}>{status}</HanCell>
                <Cell $w={144} $flag={row !== 100 && row !== 112}>{id}</Cell>
              </DataRow>
            );
          })}
          <ActiveCell><FillHandle /></ActiveCell>
        </Sheet>
        <VScroll>
          <VSplit />
          <ArrowSlot $w={15}><svg width="9" height="5"><path d="M0 5h9L4.500 0z" fill="#405270" /></svg></ArrowSlot>
          <VThumb><Grip vertical /></VThumb>
        </VScroll>
        <FrameEdge />
      </Workspace>
      <SheetTabs>
        <NavButtons><NavIcon left bar /><NavIcon left /><NavIcon /><NavIcon bar /></NavButtons>
        <TabStrip><SheetTabArt /></TabStrip>
        <HSplit />
        <HScroll><ArrowSlot $w={17}><SideArrow /></ArrowSlot><HThumb><Grip /></HThumb><ArrowSlot $w={73} $end><SideArrow right /></ArrowSlot></HScroll>
        <HSplit />
      </SheetTabs>
      <StatusBar>
        <StatusItem $w={40}>就绪</StatusItem>
        <StatusItem $w={34}><MacroIcon /></StatusItem>
        <StatusRight>
          <ViewButtons>
            <ViewButton $on><svg width="13" height="11"><path d="M.5.500h12v9H.5zM.5 3.500h12M.5 6.500h12M4.500 0v9M8.500 0v9" fill="#fff" stroke="#5b6370" /></svg></ViewButton>
            <ViewButton><svg width="12" height="12"><path d="M.5.500h11v11H.5z" fill="#aab0ba" stroke="#555d6a" /><path d="M3.500 2.500h5v7h-5z" fill="#fff" stroke="#555d6a" /><path d="M5 4.500h2M5 6.500h2" stroke="#555d6a" /></svg></ViewButton>
            <ViewButton><svg width="13" height="12"><path d="M.5.500h12v11H.5z" fill="#aab0ba" stroke="#555d6a" /><path d="M1 1h4v6H1zM6 1h3v6H6z" fill="#fff" stroke="#555d6a" strokeWidth=".6" /></svg></ViewButton>
          </ViewButtons>
          <Percent>100%</Percent>
          <ZoomSlider />
        </StatusRight>
      </StatusBar>
      <OfficeOrb><Orb /></OfficeOrb>
      <Paint width="92" height="556" viewBox="320 190 92 556">
        <path fill="#00a2e8" d="M343 215L347 201 354 196 364 193 379 195 390 201 399 205 402 211V400H397V402H391V404H404L402 424 399 440V474L402 486 403 520 402 555 399 575 398 646 401 656V685L406 698 408 714 404 728 391 732 388 738 375 740 368 738V731L346 729 332 722 328 705 329 680 334 645 337 610 337 570 338 440V300L339 250 343 235z" />
        <path fill="none" stroke="#55bff0" strokeWidth="1" opacity=".65" d="M400 689q8 20 1 34M396 696q7 17-1 30M392 704q6 11-2 20" />
      </Paint>
      <Watermark>www.wooyun.org</Watermark>
      <Badge>55</Badge>
    </Window>
  );
}
